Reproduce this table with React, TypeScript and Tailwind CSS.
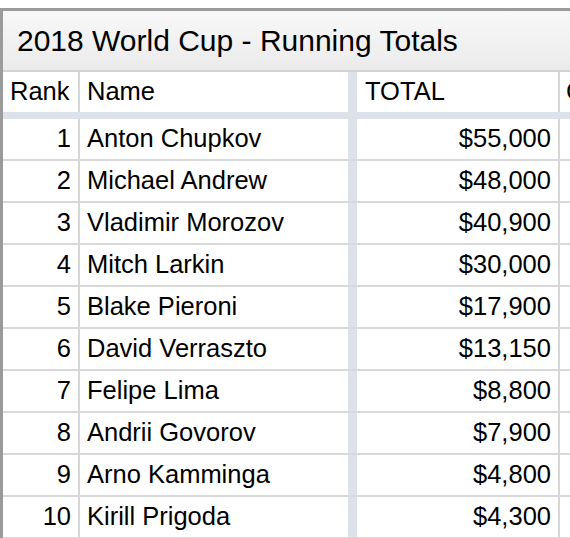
import React from "react";

const rows: [number, string, string][] = [
  [1, "Anton Chupkov", "$55,000"],
  [2, "Michael Andrew", "$48,000"],
  [3, "Vladimir Morozov", "$40,900"],
  [4, "Mitch Larkin", "$30,000"],
  [5, "Blake Pieroni", "$17,900"],
  [6, "David Verraszto", "$13,150"],
  [7, "Felipe Lima", "$8,800"],
  [8, "Andrii Govorov", "$7,900"],
  [9, "Arno Kamminga", "$4,800"],
  [10, "Kirill Prigoda", "$4,300"],
];

export default function App() {
  return (
    <div
      className="w-[570px] h-[538px] overflow-hidden bg-white pt-[8px] text-black"
      style={{ fontFamily: '"Liberation Sans", Arial, sans-serif' }}
    >
      <div className="h-[530px] border-l-[3px] border-t-[3px] border-[#9b9b9b] overflow-hidden">
        <div className="h-[61px] bg-gradient-to-b from-[#f8f8f8] to-[#ebebeb] border-b-2 border-[#d3d3d3] flex items-center pl-[14px] text-[30px] leading-none whitespace-nowrap">
          2018 World Cup - Running Totals
        </div>
        <div className="flex h-[47px] border-b-[7px] border-[#dde2ea] text-[25.5px] leading-none">
          <div className="w-[77px] shrink-0 border-r-2 border-[#d6d6d6] flex items-center pl-[7px]">Rank</div>
          <div className="w-[277px] shrink-0 border-r-[9px] border-[#dde2ea] flex items-center pl-[7px]">Name</div>
          <div className="w-[203px] shrink-0 border-r-2 border-[#d6d6d6] flex items-center pl-[8px]">TOTAL</div>
          <div className="flex-1 min-w-0 flex items-center pl-[6px] whitespace-nowrap overflow-hidden">C</div>
        </div>
        {rows.map(([rank, name, total]) => (
          <div key={rank} className="flex h-[42px] border-b-2 border-[#d9d9d9] text-[25.5px] leading-none">
            <div className="w-[77px] shrink-0 border-r-2 border-[#d6d6d6] flex items-center justify-end pr-[7px]">{rank}</div>
            <div className="w-[277px] shrink-0 border-r-[9px] border-[#dde2ea] flex items-center pl-[7px] whitespace-nowrap">{name}</div>
            <div className="w-[203px] shrink-0 border-r-2 border-[#d6d6d6] flex items-center justify-end pr-[7px]">{total}</div>
            <div className="flex-1"></div>
          </div>
        ))}
      </div>
    </div>
  );
}
